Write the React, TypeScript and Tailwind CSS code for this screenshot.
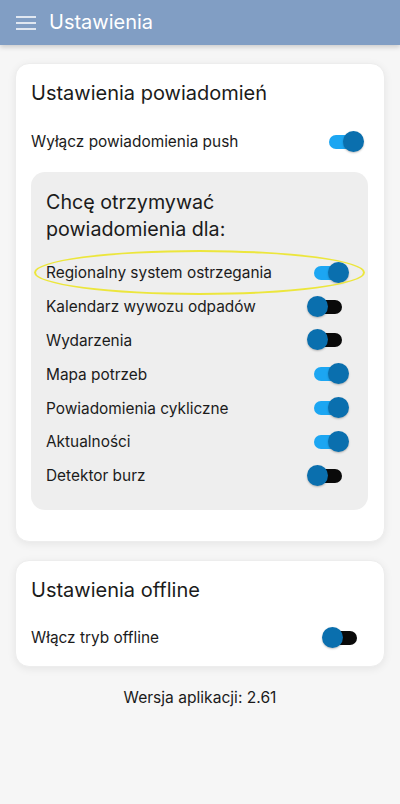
import { useState } from "react";

// ─── Android-like switch ────────────────────────────────────────────────────

function Switch({ on, onToggle }: { on: boolean; onToggle: () => void }) {
  return (
    <button type="button" onClick={onToggle} className="relative w-[42px] h-[22px] shrink-0">
      <span
        className={`absolute left-[7px] right-[7px] top-[4px] h-[14px] rounded-full ${
          on ? "bg-[#1ca6f2]" : "bg-[#0a0a0a]"
        }`}
      />
      <span
        className={`absolute top-0 w-[21px] h-[21px] rounded-full bg-[#0a6fae] shadow-[0_1px_2px_rgba(0,0,0,0.25)] ${
          on ? "right-0" : "left-0"
        }`}
      />
    </button>
  );
}

const categories = [
  { key: "rso", label: "Regionalny system ostrzegania", on: true },
  { key: "odpady", label: "Kalendarz wywozu odpadów", on: false },
  { key: "wydarzenia", label: "Wydarzenia", on: false },
  { key: "mapa", label: "Mapa potrzeb", on: true },
  { key: "cykliczne", label: "Powiadomienia cykliczne", on: true },
  { key: "aktualnosci", label: "Aktualności", on: true },
  { key: "burze", label: "Detektor burz", on: false },
];

export default function App() {
  const [push, setPush] = useState(true);
  const [offline, setOffline] = useState(false);
  const [cats, setCats] = useState<Record<string, boolean>>(
    Object.fromEntries(categories.map((c) => [c.key, c.on]))
  );

  return (
    <div
      className="min-h-[804px] w-[400px] bg-[#f6f6f6] text-[#1b1b1b]"
      style={{ fontFamily: "Inter, 'Noto Sans', sans-serif" }}
    >
      {/* Top bar */}
      <div className="h-[45px] bg-[#819ec4] flex items-center gap-[13px] pl-4 shadow-[0_2px_5px_rgba(0,0,0,0.18)]">
        <svg width="20" height="16" viewBox="0 0 20 16" className="mt-[1px]">
          <path d="M0 2h20M0 8h20M0 14h20" stroke="#fff" strokeWidth="1.5" />
        </svg>
        <span className="text-[20px] text-white leading-none -mt-[1px]">Ustawienia</span>
      </div>

      <div className="px-[15px] pt-[18px] flex flex-col gap-[18px]">
        {/* Notifications card */}
        <div className="bg-white rounded-[14px] border border-[#ededed] shadow-[0_2px_8px_rgba(0,0,0,0.07)] pl-[15px] pr-5 pt-[15px] pb-[31px]">
          <div className="text-[20px] leading-[28px]">Ustawienia powiadomień</div>
          <div className="mt-[18px] h-[34px] flex items-center justify-between">
            <span className="text-[15.4px]">Wyłącz powiadomienia push</span>
            <Switch on={push} onToggle={() => setPush(!push)} />
          </div>

          <div className="mt-[13px] -mr-1 bg-[#eeeeee] rounded-[14px] pl-[15px] pr-[19px] pt-[17px] pb-[17px]">
            <div className="text-[19.7px] leading-[26.5px]">
              Chcę otrzymywać
              <br />
              powiadomienia dla:
            </div>
            <div className="mt-[14px] flex flex-col">
              {categories.map((c, i) => (
                <div key={c.key} className="relative h-[33.8px] flex items-center justify-between">
                  <span className="text-[15.4px]">{c.label}</span>
                  <Switch
                    on={cats[c.key]}
                    onToggle={() => setCats({ ...cats, [c.key]: !cats[c.key] })}
                  />
                  {i === 0 && (
                    <span className="pointer-events-none absolute left-[-12px] right-[-16px] top-[-6px] h-[45px] rounded-[50%] border-2 border-[#ece63c]" />
                  )}
                </div>
              ))}
            </div>
          </div>
        </div>

        {/* Offline card */}
        <div className="bg-white rounded-[14px] border border-[#ededed] shadow-[0_2px_8px_rgba(0,0,0,0.07)] pl-[15px] pr-5 pt-[15px] pb-[11px]">
          <div className="text-[20px] leading-[28px]">Ustawienia offline</div>
          <div className="mt-[17px] h-[34px] flex items-center justify-between">
            <span className="text-[15.4px]">Włącz tryb offline</span>
            <Switch on={offline} onToggle={() => setOffline(!offline)} />
          </div>
        </div>

        <div className="text-center text-[15.6px] leading-[24px] mt-[1px]">Wersja aplikacji: 2.61</div>
      </div>
    </div>
  );
}
